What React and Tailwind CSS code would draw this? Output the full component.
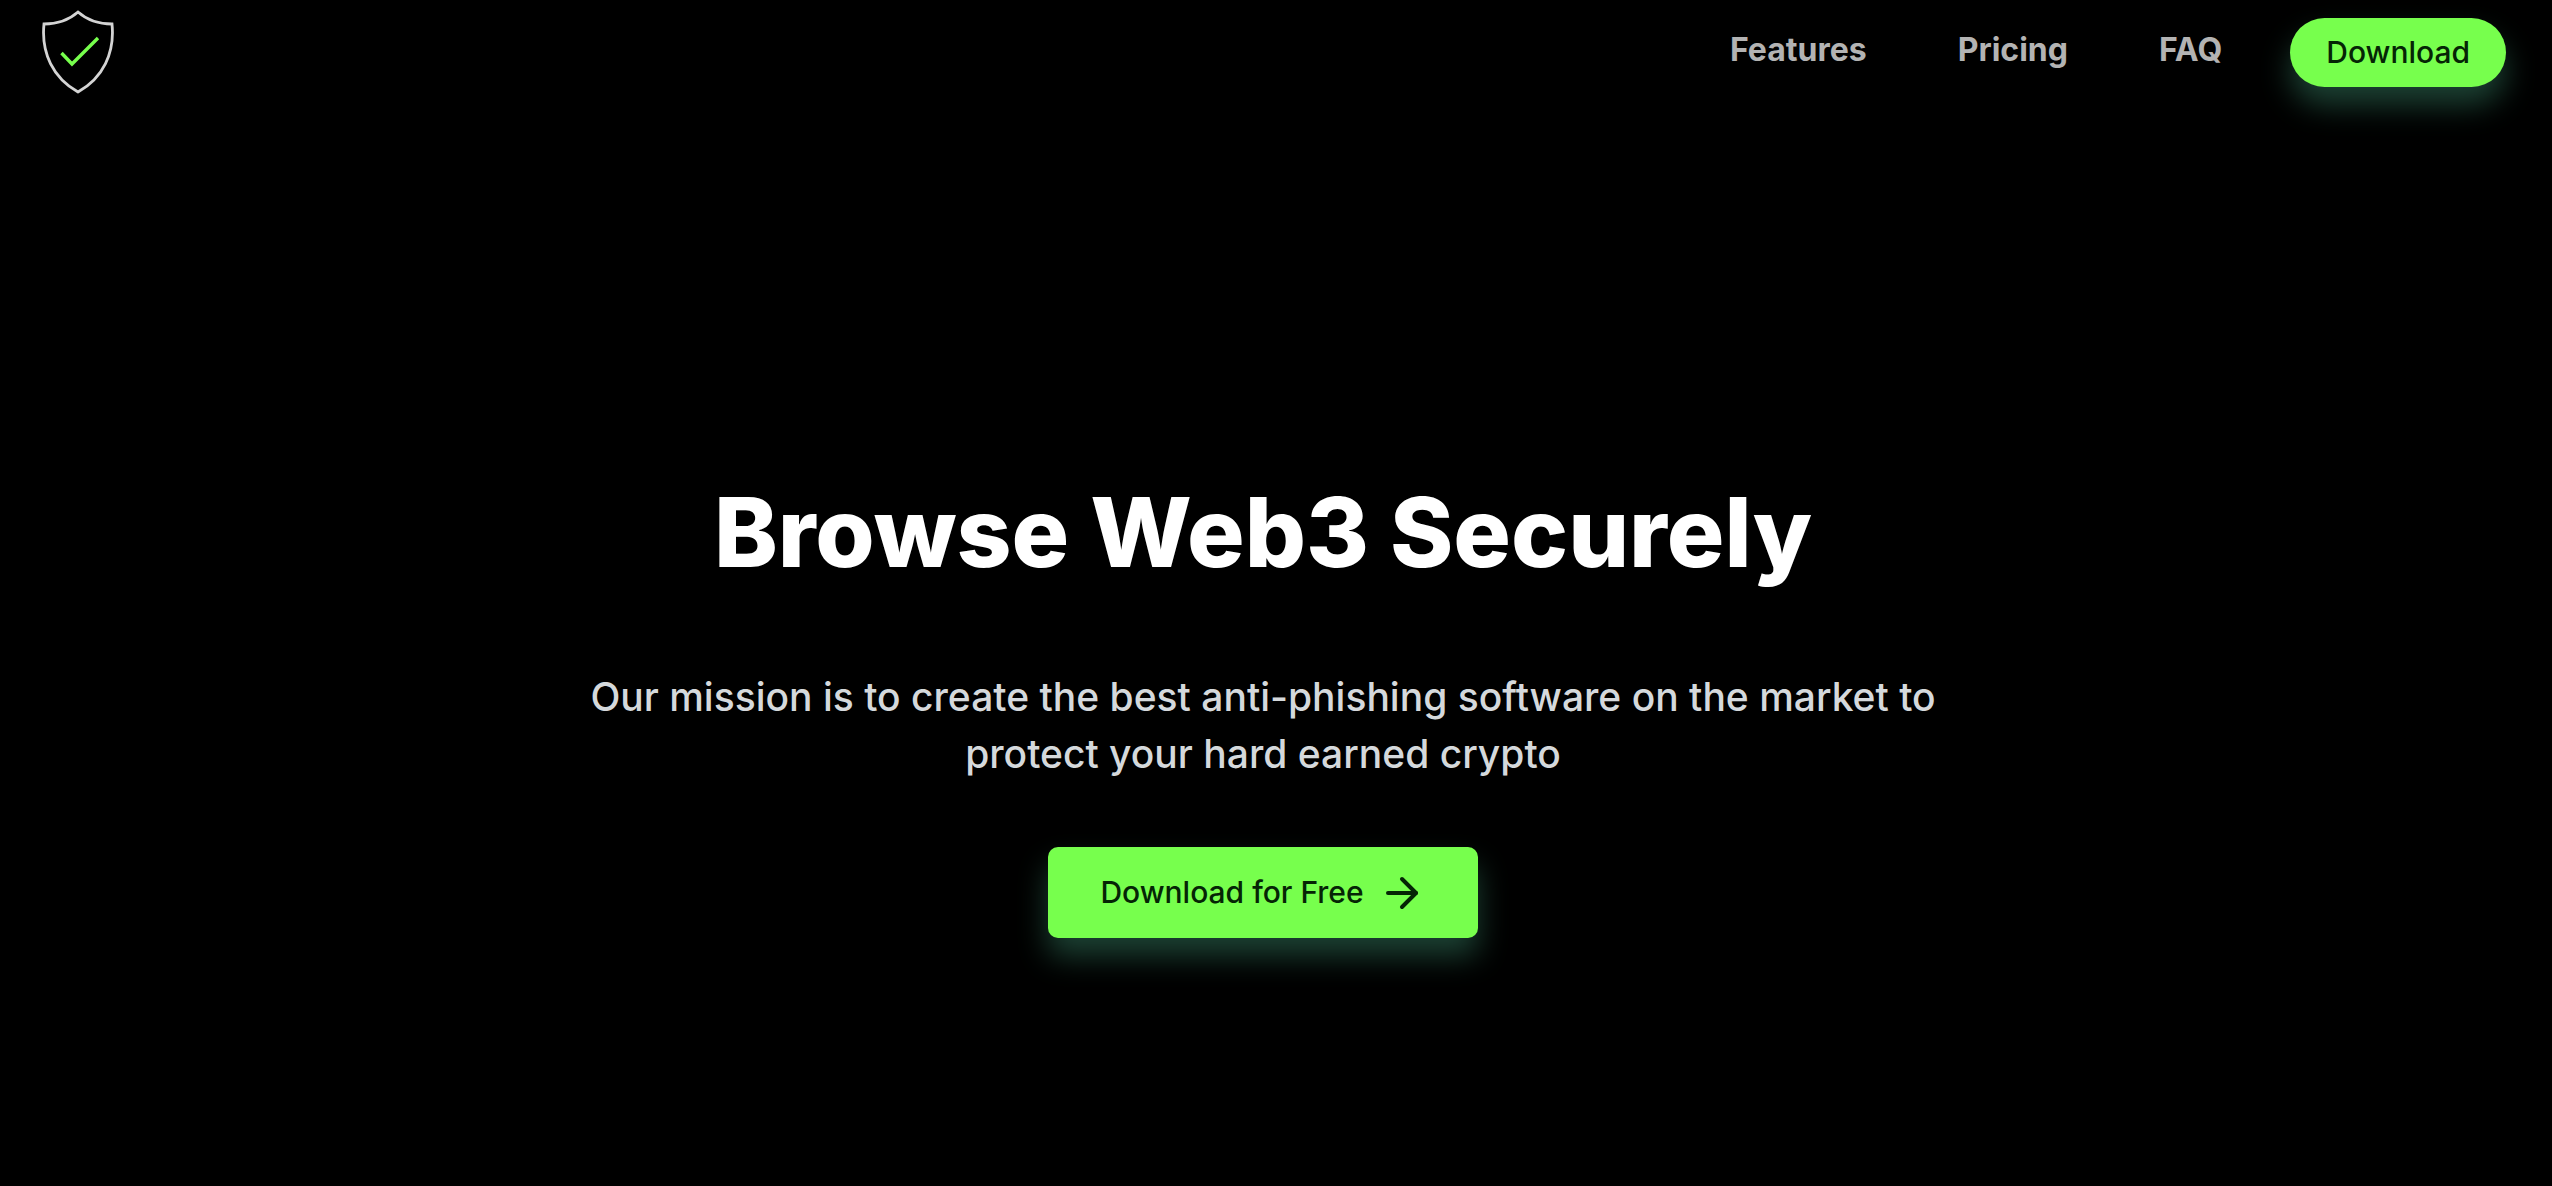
import { ArrowRight } from "lucide-react";

const links = [
  { label: "Features", href: "#features" },
  { label: "Pricing", href: "#pricing" },
  { label: "FAQ", href: "#faq" },
];

function Logo() {
  return (
    <svg viewBox="0 0 72 84" fill="none" className="h-21 w-18">
      <path
        d="M36 2 C27 10 15 14 2 14 C-1 43 11 68 36 82 C61 68 73 43 70 14 C57 14 45 10 36 2 Z"
        stroke="#d4d4d4"
        strokeWidth="2.8"
      />
      <path d="M19.5 43 L30 54 L56 28" stroke="#77ff4d" strokeWidth="3.4" />
    </svg>
  );
}

function Navbar() {
  return (
    <header className="flex items-start justify-between pt-2.5 pr-[46px] pl-[42px]">
      <a href="#home" aria-label="Home">
        <Logo />
      </a>
      <nav className="flex items-start pt-2">
        <ul className="flex gap-[91px] pt-2 pr-[68px] text-[32px] leading-[48px] font-bold text-[#b3b3b3]">
          {links.map((link) => (
            <li key={link.label}>
              <a href={link.href}>{link.label}</a>
            </li>
          ))}
        </ul>
        <button className="h-[69px] rounded-full bg-[#77ff4d] px-9 text-[30px] font-medium text-[#052505] shadow-[0_18px_30px_0_rgba(52,120,95,0.54)]">
          Download
        </button>
      </nav>
    </header>
  );
}

function Hero() {
  return (
    <main className="flex flex-col items-center pt-[374px] pr-[26px] pb-20 text-center">
      <h1 className="text-[96px] leading-[128px] font-extrabold text-white">Browse Web3 Securely</h1>
      <p className="mt-18 max-w-[1400px] text-[39px] leading-[57px] font-medium text-[#d5d9dc]">
        Our mission is to create the best anti-phishing software on the market to protect your hard earned crypto
      </p>
      <button className="mt-[65px] flex h-[91px] items-center gap-3.5 rounded-[10px] bg-[#77ff4d] px-[52px] text-[30px] font-medium text-[#052505] shadow-[0_18px_30px_0_rgba(52,120,95,0.54)]">
        Download for Free
        <ArrowRight className="size-12" strokeWidth={2} />
      </button>
    </main>
  );
}

export default function App() {
  return (
    <div className="min-h-screen bg-black font-['Inter',sans-serif]">
      <Navbar />
      <Hero />
    </div>
  );
}
